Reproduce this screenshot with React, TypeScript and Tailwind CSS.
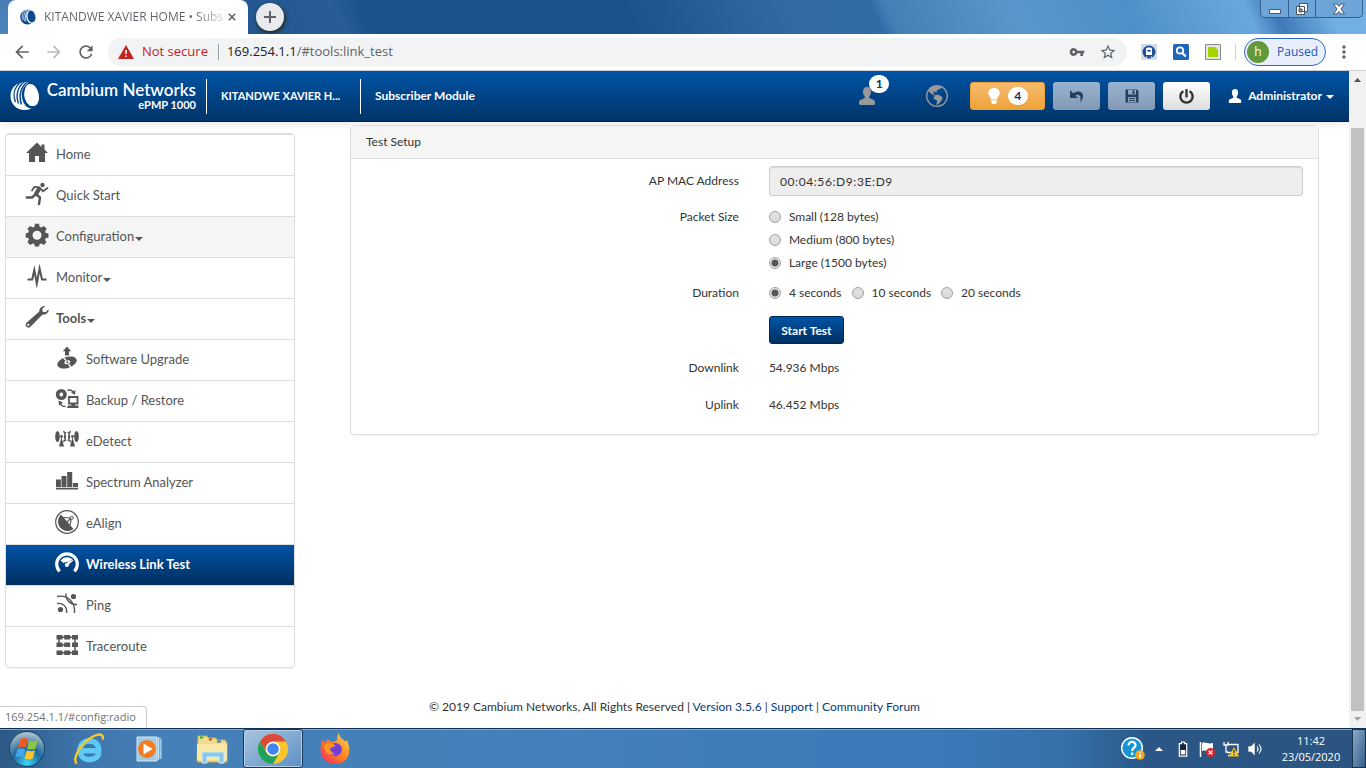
import { ReactNode, useState } from "react";
import { BsGlobeAmericas } from "react-icons/bs";
import { FaPowerOff } from "react-icons/fa";
import {
  MdArrowBack,
  MdArrowForward,
  MdMoreVert,
  MdRefresh,
  MdStarBorder,
  MdVpnKey,
} from "react-icons/md";

type NavItem = {
  label: string;
  href: string;
  icon: ReactNode;
  caret?: boolean;
  bold?: boolean;
  hovered?: boolean;
  sub?: boolean;
  active?: boolean;
};

function Logo({ className, bg, fg }: { className: string; bg: string; fg: string }) {
  return (
    <svg viewBox="0 0 30 30" className={className} aria-hidden="true">
      <path d="M17.500.8C7 .5.500 6.500.500 15 .500 23 6.500 29 14.500 29c4 0 7-1 9.500-3.500L20 3z" fill={fg} />
      <g fill="none" stroke={bg}>
        <path d="M12.500 0C5.500 4.500 2 12 5.500 21" strokeWidth="1.300" />
        <path d="M15.500 0C8.500 4.500 5 13 8.500 22.500" strokeWidth="1.400" />
        <path d="M18.500 0C11.500 5 8 13.500 11.500 23.500" strokeWidth="1.500" />
        <path d="M22 1C14 5 11.500 12 14 19c2 6.500 7.500 9 12 6" strokeWidth="2.600" />
      </g>
      <ellipse cx="21.800" cy="14" rx="7" ry="11.200" fill={fg} transform="rotate(-12 21.800 14)" />
    </svg>
  );
}

function NavIcon({ children }: { children: ReactNode }) {
  return (
    <svg viewBox="0 0 24 24" className="size-6 shrink-0" fill="currentColor" aria-hidden="true">
      {children}
    </svg>
  );
}

const Caret = ({ className }: { className: string }) => (
  <svg viewBox="0 0 8 4" className={`h-1 w-2 ${className}`} fill="currentColor" aria-hidden="true">
    <path d="M0 0h8L4 4z" />
  </svg>
);

const UserShape = ({ className }: { className: string }) => (
  <svg viewBox="0 0 16 18" className={className} fill="currentColor" aria-hidden="true">
    <path d="M8 0c2.600 0 4 1.900 4 4.500 0 2.200-.8 4-1.800 5v1.600l4 1.700c1.300.6 1.800 1.400 1.800 2.800v1c0 .8-.5 1.400-1.400 1.400H1.400C.5 18 0 17.400 0 16.600v-1c0-1.400.5-2.200 1.800-2.800l4-1.700V9.500C4.800 8.500 4 6.700 4 4.500 4 1.900 5.400 0 8 0z" />
  </svg>
);

const navItems: NavItem[] = [
  {
    label: "Home",
    href: "#home",
    icon: (
      <NavIcon>
        <path d="M12 1.500 1 12h3v9h6v-6h4v6h6v-9h3l-3.500-3.400V3.500h-3v2.400z" />
      </NavIcon>
    ),
  },
  {
    label: "Quick Start",
    href: "#quick",
    icon: (
      <NavIcon>
        <circle cx="17.500" cy="3" r="2.200" />
        <g fill="none" stroke="currentColor" strokeLinejoin="round" strokeLinecap="round">
          <path d="M14 7 11 12" strokeWidth="4.200" />
          <path d="M14.500 5.500 9.500 4.800 7 8.500" strokeWidth="1.800" />
          <path d="M15.500 6.500 18 9.300 22.500 6" strokeWidth="1.800" />
          <path d="M11.500 12.500 15 15.500 14 22" strokeWidth="2.400" />
          <path d="M10.500 12.500 7 15.500H1.800" strokeWidth="2.400" />
        </g>
      </NavIcon>
    ),
  },
  {
    label: "Configuration",
    href: "#config",
    caret: true,
    hovered: true,
    icon: (
      <NavIcon>
        <path
          fillRule="evenodd"
          d="m10 .8 4 0 .7 2.900 1.600.7L18.900 2.900l2.800 2.900-1.600 2.400.7 1.700 2.700.6v4l-2.800.7-.7 1.600 1.500 2.500-2.800 2.800-2.500-1.500-1.600.7-.7 2.300h-4l-.6-2.500-1.700-.7-2.400 1.500-2.800-2.800 1.500-2.500-.7-1.600-2.500-.6v-4l2.500-.6.7-1.700L2.400 5.700 5.200 2.900l2.500 1.500 1.700-.7zM12 7.700a4.500 4.500 0 1 0 0 9 4.500 4.500 0 0 0 0-9z"
        />
      </NavIcon>
    ),
  },
  {
    label: "Monitor",
    href: "#monitor",
    caret: true,
    icon: (
      <NavIcon>
        <path
          d="M2.500 15.500h4.700L9.300 6 11.800 19.500 14.600 4.500 17 15.500h4.500"
          fill="none"
          stroke="currentColor"
          strokeWidth="2"
          strokeMiterlimit="12"
        />
      </NavIcon>
    ),
  },
  {
    label: "Tools",
    href: "#tools",
    caret: true,
    bold: true,
    icon: (
      <NavIcon>
        <path
          fillRule="evenodd"
          d="M14.300 6.500c-.2-3 2.400-5.700 6-5.500l-3 3 .4 2.800 2.800.4 3-3c.6 3.200-2.600 6.200-6 5.300L5.500 21.800c-2.800 2.600-6.600-1.200-4-4zM3.300 18.700a1.100 1.100 0 1 0 0 2.200 1.100 1.100 0 0 0 0-2.200z"
        />
      </NavIcon>
    ),
  },
  {
    label: "Software Upgrade",
    href: "#tools:upgrade",
    sub: true,
    icon: (
      <NavIcon>
        <path d="m12 .5 4.200 4.700H14V9.500h-4V5.200H7.800z" />
        <ellipse cx="12" cy="16.500" rx="10" ry="5.500" transform="rotate(-18 12 16.500)" />
        <path d="M8.500 11.500 11 14.500M13.500 18l3 4" stroke="white" strokeWidth="1.300" />
        <ellipse cx="12.300" cy="16.300" rx="3" ry="1.800" fill="white" transform="rotate(-18 12.300 16.300)" />
        <ellipse cx="12.300" cy="16.300" rx="1.400" ry=".8" />
      </NavIcon>
    ),
  },
  {
    label: "Backup / Restore",
    href: "#tools:backup",
    sub: true,
    icon: (
      <NavIcon>
        <circle cx="6.300" cy="7.500" r="3.700" fill="none" stroke="currentColor" strokeWidth="3.600" />
        <path d="M12.500 3.500c2.500-1 4.500-.5 6 2" fill="none" stroke="currentColor" strokeWidth="1.500" />
        <path d="m20.500 3-.5 5-4-2.500zM3.500 13.500l4.500 2-4 3z" />
        <path d="M5.500 16c.3 2.500 2 3.500 5 3.500" fill="none" stroke="currentColor" strokeWidth="1.500" />
        <path d="M14 10h8.500v6.500H14z" fill="none" stroke="currentColor" strokeWidth="1.800" />
        <path d="M16.500 17h3.500v1.500h-3.500zM13 18.500h10.500V21H12z" />
      </NavIcon>
    ),
  },
  {
    label: "eDetect",
    href: "#tools:edetect",
    sub: true,
    icon: (
      <NavIcon>
        <ellipse cx="2.500" cy="8.500" rx="2.300" ry="5.500" />
        <ellipse cx="21.500" cy="8.500" rx="2.300" ry="5.500" />
        <path
          d="M8.500 3c2.500 3 2.500 8 0 11M11 4c-2 3-2 6 0 9M13 4c2 3 2 6 0 9M15.500 3c-2.500 3-2.500 8 0 11"
          fill="none"
          stroke="currentColor"
          strokeWidth="1.300"
        />
        <path d="M6.500 9 4 18.500h5zM17.500 9 15 18.500h5z" />
        <circle cx="6.500" cy="8.500" r="1.400" />
        <circle cx="17.500" cy="8.500" r="1.400" />
      </NavIcon>
    ),
  },
  {
    label: "Spectrum Analyzer",
    href: "#tools:spectrum",
    sub: true,
    icon: (
      <NavIcon>
        <path d="M1 10.500h4.900V18H1zM6.500 7h5v11h-5zM12.200 3h5v15h-5zM17.900 14H23v4h-5.100zM1 18.800h22v1.700H1z" />
      </NavIcon>
    ),
  },
  {
    label: "eAlign",
    href: "#tools:ealign",
    sub: true,
    icon: (
      <NavIcon>
        <circle cx="12" cy="12" r="11.300" fill="none" stroke="currentColor" strokeWidth="1.200" />
        <path d="M6 4.500 18.500 19C13 23 6.500 20.500 4 16 2.300 12 2.800 7.500 6 4.500z" />
        <path d="m8 7.500 8.500.5L15 15m-3-3 4-4" fill="none" stroke="currentColor" strokeWidth="1.200" />
        <circle cx="16.800" cy="7.800" r="1.500" fill="white" stroke="currentColor" />
      </NavIcon>
    ),
  },
  {
    label: "Wireless Link Test",
    href: "#tools:link_test",
    sub: true,
    active: true,
    icon: (
      <NavIcon>
        <path d="M4.600 20.300A10.300 10.300 0 1 1 19.400 20.300" fill="none" stroke="currentColor" strokeWidth="3.200" />
        <path d="M5.500 9.500c3.500-4.500 9.500-4.500 13 0L15.500 12c-2-1.500-5-1.500-7 0z" />
        <path d="m10.500 13 7-4" stroke="#003d7c" strokeWidth=".8" />
        <path d="m10.500 12.500 7-3.500-4.500 6z" />
        <circle cx="11.800" cy="14" r="2" />
      </NavIcon>
    ),
  },
  {
    label: "Ping",
    href: "#tools:ping",
    sub: true,
    icon: (
      <NavIcon>
        <circle cx="5.500" cy="17.500" r="2.600" />
        <circle cx="18.500" cy="4.500" r="2.600" />
        <path
          d="M2 11.500c6-1 10.500 3.500 9.500 9.500M2 4.500c11-2 18.500 6 17.500 16.500M11 1.500c-.5 6 4 11.500 11 11"
          fill="none"
          stroke="currentColor"
          strokeWidth="1.400"
        />
      </NavIcon>
    ),
  },
  {
    label: "Traceroute",
    href: "#tools:traceroute",
    sub: true,
    icon: (
      <NavIcon>
        <path d="M1.500 2h6v4.500h-6zM9.200 2h6v4.500h-6zM17 2h6v4.500h-6zM1.500 9.500h6V14h-6zM9.200 9.500h6V14h-6zM17 9.500h6V14h-6zM1.500 17.500h6V22h-6zM9.200 17.500h6V22h-6zM17 17.500h6V22h-6z" />
        <path d="M4 4.200h16v15.500H4M4 4v8h9" fill="none" stroke="currentColor" strokeWidth="1.500" />
      </NavIcon>
    ),
  },
];

function BrowserChrome() {
  return (
    <>
      <div className="flex h-[34px] bg-[linear-gradient(65deg,#4f86bf_0%,#1b5089_10%,#2a5c98_25%,#1b528c_27%,#1b528c_46%,#3569a3_58%,#2f6ba6_64%,#4480b6_65%,#5896cc_74%,#4d8fc9_82%,#69a8dd_91%,#3f78b7_93%,#72b0e4_97%)]">
        <div className="ml-2 flex w-[240px] items-center rounded-t-lg bg-white pl-3">
          <Logo className="mr-2 size-4 shrink-0" bg="#ffffff" fg="#0b4a8f" />
          <div className="flex-1 bg-[linear-gradient(90deg,#5f6368_82%,#d8dadc)] bg-clip-text text-xs whitespace-nowrap text-transparent">
            KITANDWE XAVIER HOME • Subs
          </div>
          <button aria-label="Close tab" className="mr-2 flex size-4 items-center justify-center">
            <svg viewBox="0 0 10 10" className="size-2" stroke="#5f6368" strokeWidth="2">
              <path d="m1 1 8 8M9 1 1 9" />
            </svg>
          </button>
        </div>
        <button
          aria-label="New tab"
          className="mt-[3px] ml-2 flex size-7 items-center justify-center rounded-full bg-[#e8eaed] shadow-[1px_2px_5px_#20250f]"
        >
          <svg viewBox="0 0 12 12" className="size-3" stroke="#5f6368" strokeWidth="2">
            <path d="M6 0v12M0 6h12" />
          </svg>
        </button>
        <div className="mr-[3px] ml-auto flex h-[18px] w-[103px] rounded-b-[5px] border border-t-0 border-[#355f91] bg-[#6ea5d8]">
          <button aria-label="Minimize" className="flex w-[28px] items-center justify-center border-r border-[#355f91]">
            <svg viewBox="0 0 12 12" className="size-3">
              <path d="M.5 6.500h11v4H.5z" fill="white" stroke="#4b5563" />
            </svg>
          </button>
          <button aria-label="Restore" className="flex w-[27px] items-center justify-center border-r border-[#355f91]">
            <svg viewBox="0 0 12 12" className="size-3" fill="white" stroke="#4b5563">
              <path d="M3.500.5h8v8h-8zM.5 3.500h8v8h-8z" />
              <path d="M3 6h3v3H3z" fill="#6ea5d8" />
            </svg>
          </button>
          <button aria-label="Close" className="flex flex-1 items-center justify-center">
            <svg viewBox="0 0 12 12" className="size-3">
              <path d="M.5 1h3.500l2 2.500L8 1h3.500L8 6l3.500 5H8L6 8.500 4 11H.5L4 6z" fill="white" stroke="#4b5563" />
            </svg>
          </button>
        </div>
      </div>

      <div className="flex h-[37px] items-center border-b border-[#d0d3d6] bg-white text-[#5f6368]">
        <button aria-label="Back" className="ml-3">
          <MdArrowBack className="size-5" />
        </button>
        <button aria-label="Forward" className="ml-3 text-[#b9bbbe]">
          <MdArrowForward className="size-5" />
        </button>
        <button aria-label="Reload" className="ml-3">
          <MdRefresh className="size-5" />
        </button>
        <div className="ml-3 flex h-7 flex-1 items-center rounded-full bg-[#f1f3f4] px-2.5">
          <svg viewBox="0 0 16 14" className="mr-2 h-3.5 w-4">
            <path d="M8 0l8 14H0z" fill="#c5221f" />
            <path d="M7.200 5h1.600v4H7.200zM7.200 10.500h1.600V12H7.200z" fill="white" />
          </svg>
          <span className="text-[13px] text-[#c5221f]">Not secure</span>
          <span className="mr-2 ml-2.5 h-4 w-px bg-[#9aa0a6]" />
          <span className="text-[13px]">
            <span className="text-[#202124]">169.254.1.1</span>/#tools:link_test
          </span>
          <MdVpnKey className="ml-auto size-4" />
          <MdStarBorder className="ml-3.5 size-[18px]" />
        </div>
        <div className="ml-3.5 flex items-center gap-4">
          <svg viewBox="0 0 16 16" className="size-4">
            <path d="M0 0h16v16H0z" fill="#d5dbe2" />
            <circle cx="8" cy="8" r="6.500" fill="#1f4f97" />
            <path d="M5 4.500C5 3 11 3 11 4.500V11H5z" fill="white" />
            <path d="M6 5.500h4V8H6zM6 12l-1 2m5-2 1 2" fill="#1f4f97" stroke="white" strokeWidth=".7" />
          </svg>
          <svg viewBox="0 0 16 16" className="size-4">
            <rect width="16" height="16" rx="1.500" fill="#1f66b8" />
            <circle cx="7" cy="6.500" r="3.200" fill="none" stroke="white" strokeWidth="1.800" />
            <path d="m9.300 9 3.500 3.500" stroke="white" strokeWidth="2.300" />
          </svg>
          <svg viewBox="0 0 16 16" className="size-4">
            <path d="M.5.500h15v15H.5z" fill="#e4e6e4" stroke="#878b87" />
            <path d="M3 3h7l3 3v7H3z" fill="#a4d400" />
          </svg>
        </div>
        <span className="ml-3.5 h-4 w-px bg-[#cfd1d4]" />
        <button className="ml-2 flex h-7 w-[82px] items-center rounded-full border border-[#2b67cc] bg-[#e9f0fb] pl-0.5 text-xs text-[#2255bd]">
          <span className="mr-2 flex size-[22px] items-center justify-center rounded-full bg-[#62993a] text-white">h</span>
          Paused
        </button>
        <button aria-label="Browser menu" className="mr-3 ml-2">
          <MdMoreVert className="size-5" />
        </button>
      </div>
    </>
  );
}

function AppHeader() {
  return (
    <header className="flex h-[51px] items-center border-b border-[#00254b] bg-linear-to-b from-[#0054a6] to-[#003468] text-xs font-bold text-white shadow-[0_3px_6px_#00000014]">
      <Logo className="ml-2.5 size-[30px] shrink-0" bg="#00468c" fg="#ffffff" />
      <div className="ml-1.5 flex w-[150px] flex-col items-end">
        <div className="text-[17px] leading-[18px] font-semibold whitespace-nowrap">Cambium Networks</div>
        <div className="text-[11px] leading-3">ePMP 1000</div>
      </div>
      <span className="ml-2.5 h-[35px] w-px bg-white" />
      <span className="ml-3.5 w-[139px] text-[11px]">KITANDWE XAVIER H...</span>
      <span className="h-[35px] w-px bg-white" />
      <span className="ml-3.5">Subscriber Module</span>
      <button aria-label="Users" className="relative ml-auto text-[#999999]">
        <UserShape className="h-[18px] w-4" />
        <span className="absolute -top-3 left-2.5 flex h-[18px] w-5 items-center justify-center rounded-full bg-white text-[#003468]">
          1
        </span>
      </button>
      <button aria-label="Network" className="ml-[51px] text-[#999999]">
        <BsGlobeAmericas className="size-[22px]" />
      </button>
      <button
        aria-label="Notifications"
        className="ml-[22px] flex h-7 w-[75px] items-center justify-center gap-2 rounded-[3px] border border-[#eda138] bg-linear-to-b from-[#f5bb6e] to-[#efa236]"
      >
        <svg viewBox="0 0 12 16" className="h-4 w-3" fill="currentColor">
          <path d="M6 0c3.500 0 5.700 2.300 5.700 5.300 0 2.800-2.400 3.700-2.700 6.200H3C2.700 9 .3 8.100.3 5.300.3 2.300 2.500 0 6 0zM3.200 12.300h5.600v1.800L7.800 16H4.200l-1-1.900z" />
        </svg>
        <span className="flex h-[18px] w-5 items-center justify-center rounded-full bg-white text-[#003468]">4</span>
      </button>
      <button
        aria-label="Undo"
        className="ml-2 flex h-7 w-[47px] items-center justify-center rounded-[3px] bg-linear-to-b from-[#98b3d0] to-[#8499b3] text-[#24415f]"
      >
        <svg viewBox="0 0 16 16" className="size-4" fill="currentColor">
          <path d="M1 2v8h8L6.400 7.400C9.500 5.400 13 7.500 11 14.500 18 7 12 0 4.200 5.200z" />
        </svg>
      </button>
      <button
        aria-label="Save"
        className="ml-2 flex h-7 w-[47px] items-center justify-center rounded-[3px] bg-linear-to-b from-[#98b3d0] to-[#8499b3] text-[#24415f]"
      >
        <svg viewBox="0 0 14 14" className="size-3.5" fill="currentColor">
          <path
            fillRule="evenodd"
            d="M.5.500h11.500L13.500 2v11.500H.5zM3 1v4.500h8V1zM3 8v5h8V8z"
          />
          <path d="M7.500 1.500h2V5h-2zM4 9h6v1H4zM4 11h6v1H4z" />
        </svg>
      </button>
      <button
        aria-label="Reboot"
        className="ml-2 flex h-7 w-[47px] items-center justify-center rounded-[3px] bg-linear-to-b from-white to-[#dddddd] text-[#333333]"
      >
        <FaPowerOff className="size-[15px]" />
      </button>
      <button className="mr-[15px] ml-[18px] flex items-center">
        <UserShape className="mr-1.5 h-3.5 w-3.5" />
        Administrator
        <Caret className="mt-0.5 ml-1" />
      </button>
    </header>
  );
}

function Sidebar() {
  return (
    <nav className="w-[290px] shrink-0 overflow-hidden rounded border border-[#dddddd] text-[13px] text-[#555555] shadow-[0_1px_1px_#0000000d]">
      {navItems.map((item) => (
        <a
          key={item.label}
          href={item.href}
          className={`flex h-[41px] items-center border-t border-[#dddddd] ${
            item.sub ? "pl-[49px]" : "pl-[19px]"
          } ${item.hovered ? "bg-[#f5f5f5]" : ""} ${
            item.active ? "bg-linear-to-b from-[#0054a6] to-[#002f5f] font-bold text-white" : ""
          } ${item.bold ? "font-bold" : ""}`}
        >
          <span className="mr-[7px] -mt-1 flex">{item.icon}</span>
          {item.label}
          {item.caret && <Caret className="mt-[3px] ml-px" />}
        </a>
      ))}
    </nav>
  );
}

function Radio({
  name,
  label,
  checked,
  onChange,
}: {
  name: string;
  label: string;
  checked: boolean;
  onChange: () => void;
}) {
  return (
    <label className="flex items-center gap-2">
      <input
        type="radio"
        name={name}
        checked={checked}
        onChange={onChange}
        className="size-3 appearance-none rounded-full border border-[#a0a0a0] bg-linear-to-b from-[#e2e2e2] to-[#dadada] checked:bg-[radial-gradient(circle,#555555_0_3px,#e4e4e4_4px)]"
      />
      {label}
    </label>
  );
}

function TestSetup() {
  const [size, setSize] = useState("Large (1500 bytes)");
  const [duration, setDuration] = useState("4 seconds");
  const labelClass = "col-span-5 px-[15px] text-right";
  const fieldClass = "col-span-7 px-[15px]";

  return (
    <section className="rounded border border-[#dddddd] bg-white text-xs text-[#333333] shadow-[0_1px_1px_#0000000d]">
      <h2 className="flex h-[33px] items-center border-b border-[#dddddd] bg-[#f5f5f5] px-[15px]">Test Setup</h2>
      <div className="grid grid-cols-12 pt-[7px] leading-[23px]">
        <label htmlFor="mac" className={`${labelClass} pt-[3px]`}>
          AP MAC Address
        </label>
        <div className={`${fieldClass} pb-[9px]`}>
          <input
            id="mac"
            readOnly
            value="00:04:56:D9:3E:D9"
            className="h-[30px] w-full rounded-[3px] border border-[#cccccc] bg-[#eeeeee] px-2.5 tracking-wider shadow-[inset_0_1px_1px_#00000013]"
          />
        </div>
        <div className={labelClass}>Packet Size</div>
        <div className={`${fieldClass} pb-[7px]`}>
          {["Small (128 bytes)", "Medium (800 bytes)", "Large (1500 bytes)"].map((s) => (
            <Radio key={s} name="size" label={s} checked={size === s} onChange={() => setSize(s)} />
          ))}
        </div>
        <div className={labelClass}>Duration</div>
        <div className={`${fieldClass} flex gap-2.5 pb-3`}>
          {["4 seconds", "10 seconds", "20 seconds"].map((s) => (
            <Radio key={s} name="duration" label={s} checked={duration === s} onChange={() => setDuration(s)} />
          ))}
        </div>
        <div className={`${fieldClass} col-start-6 pb-3`}>
          <button className="flex h-7 w-[75px] items-center justify-center rounded-[3px] border border-[#002a56] bg-linear-to-b from-[#0054a6] to-[#003163] font-bold text-white">
            Start Test
          </button>
        </div>
        <div className={labelClass}>Downlink</div>
        <div className={`${fieldClass} pb-3.5`}>54.936 Mbps</div>
        <div className={labelClass}>Uplink</div>
        <div className={`${fieldClass} pb-[18px]`}>46.452 Mbps</div>
      </div>
    </section>
  );
}

function Scrollbar() {
  return (
    <div className="flex w-[17px] shrink-0 flex-col items-center bg-[#f1f1f1]">
      <svg viewBox="0 0 17 17" className="size-[17px]">
        <path d="M5 11h7L8.500 7z" fill="#505050" />
      </svg>
      <div className="mt-[40px] w-[13px] flex-1 bg-[#c1c1c1]" />
      <svg viewBox="0 0 17 17" className="size-[17px]">
        <path d="M5 6h7l-3.500 4z" fill="#a3a3a3" />
      </svg>
    </div>
  );
}

function Taskbar() {
  return (
    <div className="flex h-10 items-center border-t border-[#12304f] bg-[linear-gradient(90deg,#2c5985_0%,#3f75ac_6%,#4680b8_12%,#4380bc_40%,#3a78b8_70%,#3570a9_78%,#2a5787_84%,#2b5480_100%)] text-[11px] text-white shadow-[inset_0_1px_0_#7fa9d2]">
      <button aria-label="Start" className="ml-2">
        <svg viewBox="0 0 38 38" className="size-[38px]">
          <defs>
            <radialGradient id="orb" cx=".5" cy=".9" r=".85">
              <stop offset="0" stopColor="#3ad6f7" />
              <stop offset=".5" stopColor="#1d679c" />
              <stop offset="1" stopColor="#a9bfce" />
            </radialGradient>
          </defs>
          <circle cx="19" cy="19" r="17.500" fill="url(#orb)" stroke="#17405f" />
          <path d="M12.500 9c2.500-1.500 5.500-1 7.500.3l-2.300 8.700c-2.300-1.300-5.200-1.600-7.900-.4z" fill="#ee5a24" />
          <path d="M21.300 10.200c2.700 1.400 5.500 1.200 8.300 0l-2.300 8.500c-2.700 1.200-5.500 1.200-8.200 0z" fill="#8cc63f" />
          <path d="M9.500 19c2.700-1.200 5.600-1 7.900.4l-2.200 8.300c-2.500-1.500-5-1.700-7.800-.4z" fill="#46a5e8" />
          <path d="M18.800 20.200c2.700 1.300 5.400 1.300 8.200.1l-2.200 8.200c-2.800 1.300-5.700 1.200-8.200-.1z" fill="#fdc52c" />
        </svg>
      </button>
      <button aria-label="Internet Explorer" className="ml-[27px]">
        <svg viewBox="0 0 32 32" className="size-8">
          <path
            d="M26 20.500c-1.500 4-5 6-9.500 6-5.500 0-9.500-3.800-9.500-9.300S11 8 16.500 8c6.300 0 9.500 4 9.300 9.800H8"
            fill="none"
            stroke="#5fc9f5"
            strokeWidth="5.500"
          />
          <path d="M4 30.500C-2 27 8 9 21 3 28 0 31 2 29.500 6.500" fill="none" stroke="#f8c927" strokeWidth="2.400" />
        </svg>
      </button>
      <button aria-label="Media Player" className="ml-7">
        <svg viewBox="0 0 32 32" className="size-8">
          <path d="M9 4h19v22H9z" fill="#6db1dc" />
          <path d="M25.500 5v22M28 6v20" stroke="#c5e3f5" />
          <path d="M4 4h20v24H4z" fill="#a3c9e3" stroke="#d2e8f6" />
          <circle cx="14" cy="16" r="9" fill="#f57c1e" />
          <path d="m10.500 10.500 9 5.500-9 5.500z" fill="white" />
        </svg>
      </button>
      <button aria-label="File Explorer" className="ml-[30px]">
        <svg viewBox="0 0 34 32" className="h-8 w-[34px]">
          <path d="M3 3h9l1 2h8l1 2h8l2 3v19H2z" fill="#f2dc8c" stroke="#c8aa52" />
          <path d="M5 4.500h3" stroke="#19a94a" strokeWidth="2" />
          <path d="M14 6.500h3" stroke="#d9412a" strokeWidth="2" />
          <path d="M22 8.500h4" stroke="#2684d8" strokeWidth="2" />
          <path d="M2 11h30v16H2z" fill="#f8e8a8" />
          <path d="M7 30V19h22v11h-5v-6H12v6z" fill="#8ac8e6" stroke="#d3eefa" />
        </svg>
      </button>
      <button
        aria-label="Chrome"
        className="ml-3.5 flex h-[39px] w-[60px] items-center justify-center rounded-[3px] border border-[#1b3857] bg-linear-to-br from-[#a9c5e0] to-[#5c8fc2] shadow-[inset_0_0_0_1px_#b5cfe6]"
      >
        <svg viewBox="0 0 30 30" className="size-[30px]">
          <circle cx="15" cy="15" r="15" fill="#fbc62b" />
          <path d="M2 7.500A15 15 0 0 1 28 7.500H15a7.500 7.500 0 0 0-6.500 11.250z" fill="#dc4a3d" />
          <path d="M2 7.500A15 15 0 0 0 15 30l6.500-11.250A7.500 7.500 0 0 1 8.500 18.750z" fill="#1fa35c" />
          <circle cx="15" cy="15" r="7.200" fill="white" />
          <circle cx="15" cy="15" r="5.800" fill="#4384f5" />
        </svg>
      </button>
      <button aria-label="Firefox" className="ml-4">
        <svg viewBox="0 0 32 32" className="size-8">
          <defs>
            <linearGradient id="fox" x1="1" y1="0" x2="0" y2="1">
              <stop offset="0" stopColor="#ffe34a" />
              <stop offset=".5" stopColor="#ff7f22" />
              <stop offset="1" stopColor="#f0256c" />
            </linearGradient>
          </defs>
          <path
            d="M20 0c0 5 5 6 6.500 9l1-2C33 16 31 31 16 31 4 31-1 20 2.500 10.500L3 7l4 3 1.500-4L12 9c2-1 5 0 6-2 0-3 0-5 2-7z"
            fill="url(#fox)"
          />
          <circle cx="16.500" cy="16.500" r="6.500" fill="#7540d0" />
          <path d="M5 12c4-2 8-2 12 1-3 0-3 2-6 2 0 3 2 5 5 6-8 2-11-3-11-9z" fill="#ff961f" />
        </svg>
      </button>

      <div className="ml-auto flex items-center">
        <svg viewBox="0 0 24 24" className="size-6">
          <circle cx="11" cy="11" r="10.300" fill="#1495d5" stroke="white" strokeWidth="1.400" />
          <path d="M7.500 8.500c0-5 7.500-4.500 7 0-.4 2.600-3.300 2.500-3.300 5.500M11.200 15.500V18" fill="none" stroke="white" strokeWidth="2.200" />
          <circle cx="19" cy="18" r="4.800" fill="#f4a51d" />
          <path d="M19 14.700v1.300m0 1v4" stroke="white" strokeWidth="1.500" />
        </svg>
        <svg viewBox="0 0 8 4" className="ml-2.5 h-1 w-2" fill="white">
          <path d="M0 4h8L4 0z" />
        </svg>
        <svg viewBox="0 0 16 16" className="ml-3 size-4">
          <path d="M6.500 1.200h3v1.500h2.200v12.500H4.300V2.700h2.200z" fill="#14283d" stroke="white" strokeWidth="1.200" />
          <path d="M5.700 9h4.600v4.500H5.700z" fill="white" />
        </svg>
        <svg viewBox="0 0 16 16" className="ml-2 size-4">
          <path d="M1.500 1v15" stroke="white" strokeWidth="1.500" />
          <path d="M3 2c4-1.500 6 1.500 11 0v8c-5 1.500-7-1.500-11 0z" fill="white" />
          <circle cx="11.500" cy="11.500" r="4.500" fill="#d9272d" />
          <path d="m9.700 9.700 3.600 3.600m0-3.600-3.600 3.600" stroke="white" strokeWidth="1.300" />
        </svg>
        <svg viewBox="0 0 16 16" className="ml-2 size-4">
          <path d="M4 3.500h11v8H4M8 14.500H5M1 1v3h4V1M3 4v7h2" fill="none" stroke="white" strokeWidth="1.300" />
          <path d="m11 6 5 9.500H6z" fill="#f9d322" stroke="#9a7b0a" strokeWidth=".5" />
          <path d="M11 9v3m0 1v1.300" stroke="#222" strokeWidth="1.200" />
        </svg>
        <svg viewBox="0 0 16 16" className="ml-2 size-4">
          <path d="M1 5h3l4-4v14l-4-4H1z" fill="white" stroke="#33475b" strokeWidth=".6" />
          <path d="M10 5.500c1.300 1.500 1.300 3.500 0 5M12 3.500c2.500 2.800 2.500 6.200 0 9" fill="none" stroke="white" strokeWidth="1.100" />
        </svg>
        <div className="ml-[17px] w-[62px] text-center leading-4">
          <div>11:42</div>
          <div>23/05/2020</div>
        </div>
        <button
          aria-label="Show desktop"
          className="ml-2.5 h-[39px] w-3.5 border border-[#17344f] bg-linear-to-br from-[#8daac6] to-[#345f8c]"
        />
      </div>
    </div>
  );
}

export default function App() {
  const links = ["Version 3.5.6", "Support", "Community Forum"];

  return (
    <div className="flex min-h-screen flex-col bg-white font-['Open_Sans',sans-serif]">
      <BrowserChrome />
      <div className="relative flex flex-1">
        <div className="flex flex-1 flex-col font-['Lato',sans-serif]">
          <AppHeader />
          <div className="flex flex-1">
            <div className="pt-[11px] pl-[5px]">
              <Sidebar />
            </div>
            <main className="flex-1 pt-[3px] pr-[30px] pl-[55px]">
              <TestSetup />
            </main>
          </div>
          <footer className="pb-3 text-center text-xs leading-[18px] text-[#333333]">
            © 2019 Cambium Networks, All Rights Reserved
            {links.map((link) => (
              <span key={link}>
                {" | "}
                <a href="#about" className="text-[#003d7c]">
                  {link}
                </a>
              </span>
            ))}
          </footer>
        </div>
        <Scrollbar />
        <div className="absolute bottom-0 left-0 flex h-[22px] w-[147px] items-center rounded-tr border border-b-0 border-l-0 border-[#c8cacc] bg-white pl-[5px] text-[11px] text-[#6f7377]">
          169.254.1.1/#config:radio
        </div>
      </div>
      <Taskbar />
    </div>
  );
}
